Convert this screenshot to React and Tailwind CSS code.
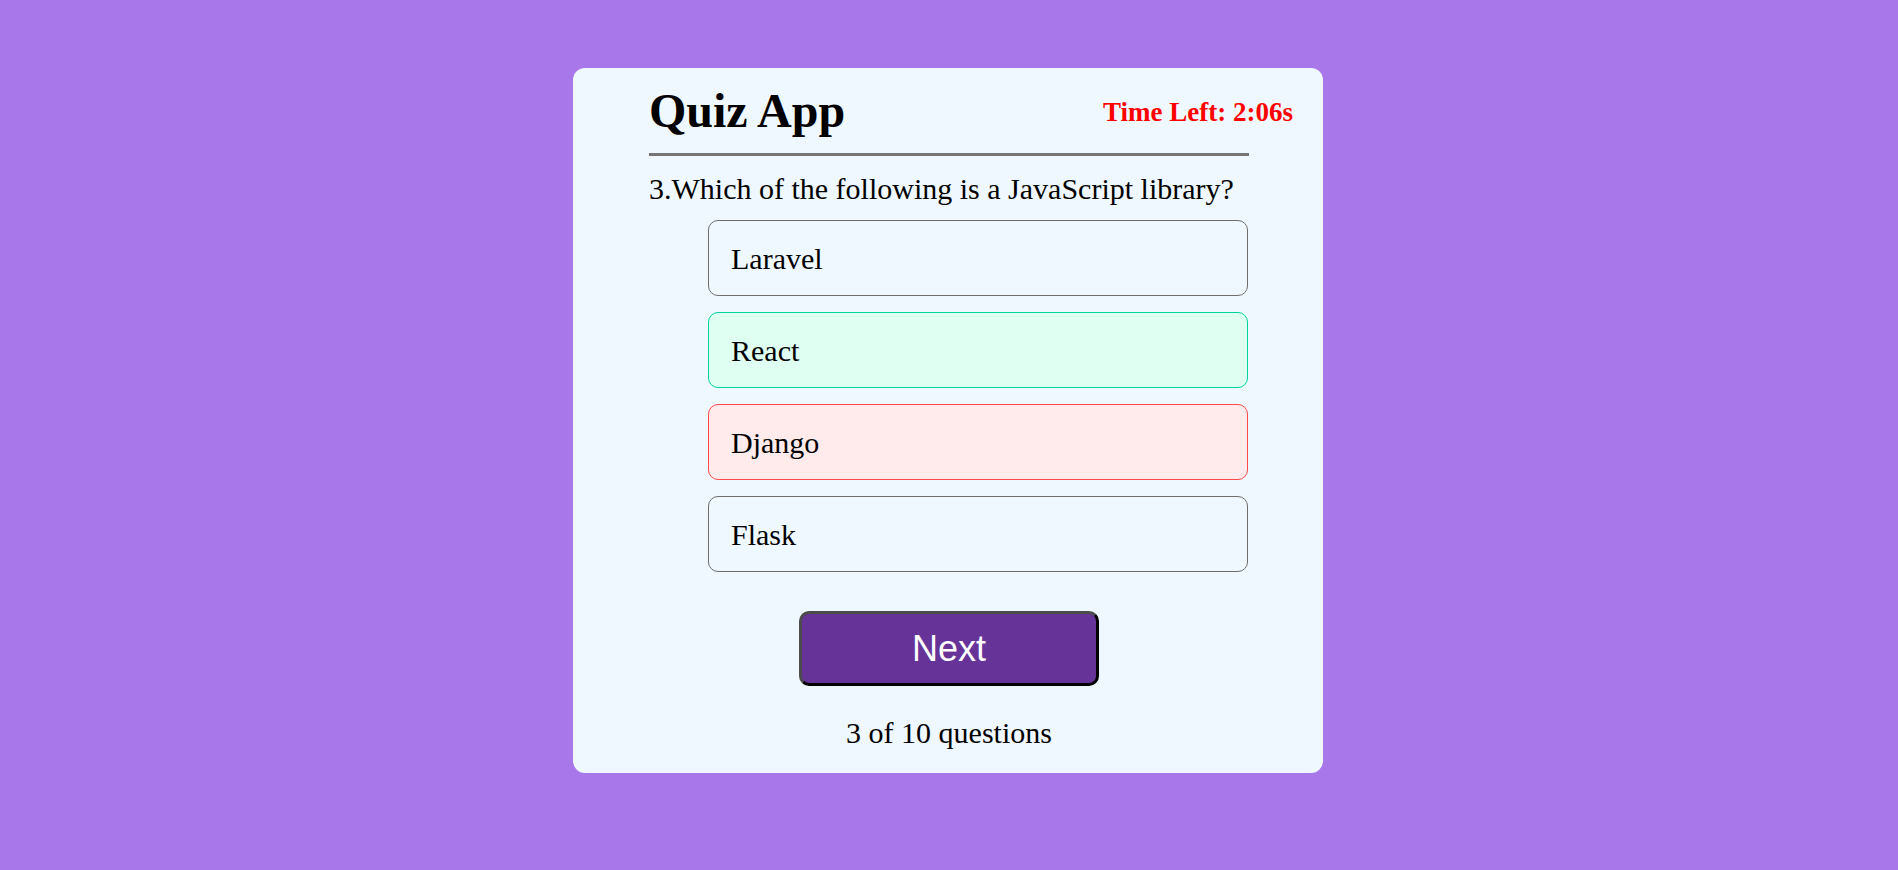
import React from "react";

const options = [
  { label: "Laravel", state: "idle" },
  { label: "React", state: "correct" },
  { label: "Django", state: "wrong" },
  { label: "Flask", state: "idle" },
];

const stateClasses = {
  idle: "border-[#6e6e6e] bg-transparent",
  correct: "border-[#00d397] bg-[#dffff2]",
  wrong: "border-[#ff4a4a] bg-[#ffebeb]",
};

export default function App() {
  return (
    <div className="min-h-screen w-full bg-[#a878ea] flex justify-center pt-[68px] font-['Liberation_Serif','Times_New_Roman',serif] text-black">
      <div className="mr-[2px] w-[750px] h-fit bg-[#f0f8ff] rounded-[12px] pl-[76px] pr-[74px] pt-[18.5px] pb-[22px] flex flex-col">
        {/* Header */}
        <div className="flex items-start justify-between w-[644px]">
          <h1 className="text-[48px] leading-[48px] font-bold">Quiz App</h1>
          <span className="mt-[12.5px] text-[27px] leading-[27px] font-bold text-[#ff0000]">
            Time Left: 2:06s
          </span>
        </div>

        <div className="mt-[18.5px] h-[3px] w-[600px] bg-[#757575]" />

        <h2 className="mt-[14.5px] text-[30px] leading-[36px]">
          3.Which of the following is a JavaScript library?
        </h2>

        {/* Options */}
        <ul className="mt-[13.5px] ml-[59px] w-[540px] flex flex-col gap-4">
          {options.map((o) => (
            <li
              key={o.label}
              className={`h-[76px] border rounded-[10px] flex items-center pl-[22px] text-[30px] cursor-pointer ${stateClasses[o.state]}`}
            >
              {o.label}
            </li>
          ))}
        </ul>

        <button className="mt-[39px] mx-auto w-[300px] h-[75px] bg-[#663399] text-white text-[36px] font-['Liberation_Sans',Arial,sans-serif] rounded-[10px] border-[3px] border-t-[#4c4c4c] border-l-[#4c4c4c] border-r-black border-b-black">
          Next
        </button>

        <p className="mt-[28.5px] text-center text-[30px] leading-[36px]">
          3 of 10 questions
        </p>
      </div>
    </div>
  );
}
